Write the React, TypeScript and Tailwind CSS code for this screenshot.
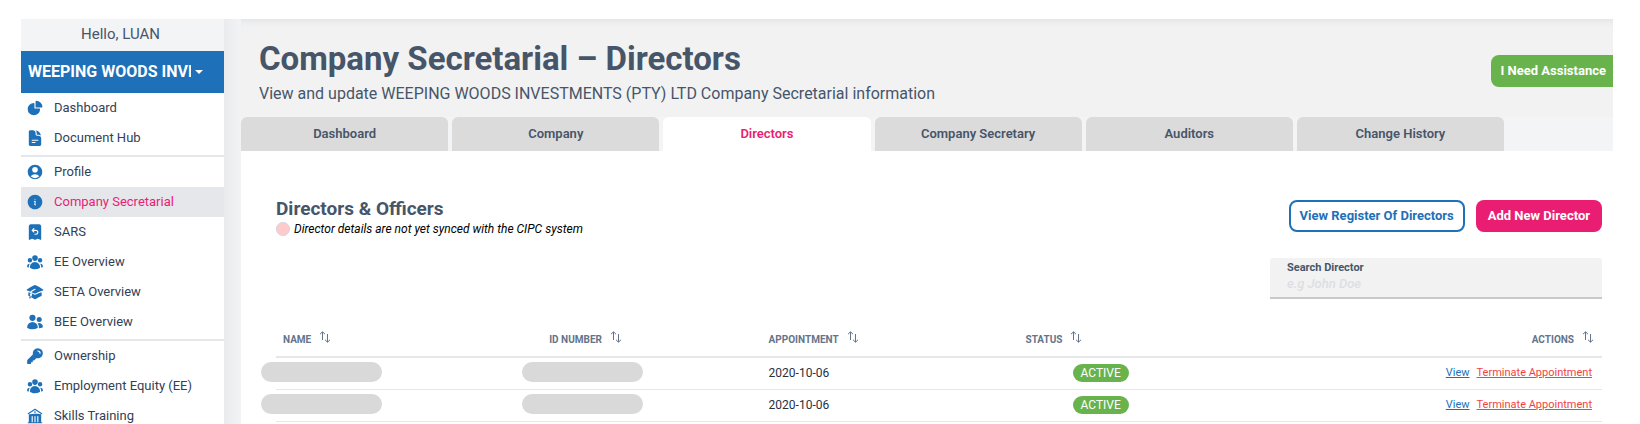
import React from "react";
import {
  HiAcademicCap,
  HiBuildingLibrary,
  HiChartPie,
  HiDocumentText,
  HiInformationCircle,
  HiKey,
  HiReceiptRefund,
  HiUserCircle,
  HiUserGroup,
  HiUsers,
} from "react-icons/hi2";
import type { IconType } from "react-icons";

type NavItem = { label: string; icon: IconType; active?: boolean };

const navGroups: NavItem[][] = [
  [
    { label: "Dashboard", icon: HiChartPie },
    { label: "Document Hub", icon: HiDocumentText },
  ],
  [
    { label: "Profile", icon: HiUserCircle },
    { label: "Company Secretarial", icon: HiInformationCircle, active: true },
    { label: "SARS", icon: HiReceiptRefund },
    { label: "EE Overview", icon: HiUserGroup },
    { label: "SETA Overview", icon: HiAcademicCap },
    { label: "BEE Overview", icon: HiUsers },
  ],
  [
    { label: "Ownership", icon: HiKey },
    { label: "Employment Equity (EE)", icon: HiUserGroup },
    { label: "Skills Training", icon: HiBuildingLibrary },
  ],
];

const tabs = ["Dashboard", "Company", "Directors", "Company Secretary", "Auditors", "Change History"];

const directors = [
  { id: 1, appointed: "2020-10-06", status: "ACTIVE" },
  { id: 2, appointed: "2020-10-06", status: "ACTIVE" },
];

function SortIcon() {
  return (
    <svg className="h-3 w-3" viewBox="0 0 12 12" fill="none" stroke="currentColor" strokeWidth="1" aria-hidden="true">
      <path d="M3.5 9V1M1 3.2 3.5 0.8 6 3.2M8.5 3v8M6 8.8l2.5 2.4L11 8.8" />
    </svg>
  );
}

function ColumnHeader({ label, className }: { label: string; className: string }) {
  return (
    <th scope="col" className={className}>
      <button type="button" className="inline-flex items-start gap-2 leading-4 font-bold">
        <span className="pt-px">{label}</span>
        <SortIcon />
      </button>
    </th>
  );
}

function Sidebar() {
  return (
    <aside className="flex w-[203px] shrink-0 flex-col">
      <p className="shrink-0 bg-[#f3f4f6] pb-0.5 text-center text-[15px] leading-[30px] text-[#475569]">
        <span className="pr-1">Hello, LUAN</span>
      </p>
      <button
        type="button"
        aria-haspopup="listbox"
        className="flex h-[42px] shrink-0 items-center gap-1 bg-[#1e70b8] pl-[7px] text-[16px] font-bold text-white"
      >
        <span className="w-[163px] overflow-hidden text-left whitespace-nowrap">WEEPING WOODS INVESTMENTS</span>
        <svg className="h-1 w-2" viewBox="0 0 8 4" fill="currentColor" aria-hidden="true">
          <path d="M0 0h8L4 4z" />
        </svg>
      </button>
      <nav aria-label="Main">
        {navGroups.map((group, index) => (
          <ul key={index} className="border-[#e5e7eb] not-last:border-b-2 not-last:pb-[2px]">
            {group.map(({ label, icon: Icon, active }) => (
              <li key={label}>
                <a
                  href="#"
                  aria-current={active ? "page" : undefined}
                  className={
                    active
                      ? "flex h-[30px] items-center gap-[10px] bg-[#e5e7eb] pl-[5px] text-[13px] text-[#e91e73]"
                      : "flex h-[30px] items-center gap-[10px] pl-[5px] text-[13px] text-[#334155]"
                  }
                >
                  <Icon className="h-[18px] w-[18px] text-[#1e70b8]" />
                  {label}
                </a>
              </li>
            ))}
          </ul>
        ))}
      </nav>
    </aside>
  );
}

function DirectorsTable() {
  return (
    <table className="mt-8 w-full table-fixed text-left text-xs">
      <thead className="border-b-2 border-[#e5e7eb] text-[10px] text-[#64748b]">
        <tr className="h-[26px] align-top">
          <ColumnHeader label="NAME" className="w-[20%] pl-[7px]" />
          <ColumnHeader label="ID NUMBER" className="w-[17%] pl-2" />
          <ColumnHeader label="APPOINTMENT" className="w-[19%] pl-[2px]" />
          <ColumnHeader label="STATUS" className="w-[17%] pl-[7px]" />
          <ColumnHeader label="ACTIONS" className="pr-2 text-right" />
        </tr>
      </thead>
      <tbody>
        {directors.map((director) => (
          <tr key={director.id} className="h-8 border-b border-[#e5e7eb]">
            <td>
              <div aria-label="Name hidden" className="-mt-0.5 -ml-[15px] h-5 w-[121px] rounded-full bg-[#d9d9d9]" />
            </td>
            <td>
              <div aria-label="ID number hidden" className="-mt-0.5 -ml-[19px] h-5 w-[121px] rounded-full bg-[#d9d9d9]" />
            </td>
            <td className="pl-[2px] text-[#27303f]">{director.appointed}</td>
            <td className="pl-[54px]">
              <span className="inline-block rounded-full bg-[#69b34c] px-2 text-xs leading-[18px] text-white">
                {director.status}
              </span>
            </td>
            <td className="pr-2.5 text-right text-[11px]">
              <a href="#" className="mr-[7px] text-[#1e70b8] underline">View</a>
              <a href="#" className="text-[#ef4444] underline">Terminate Appointment</a>
            </td>
          </tr>
        ))}
      </tbody>
    </table>
  );
}

export default function App() {
  return (
    <div className="flex h-screen overflow-hidden bg-white pt-[19px] pr-[27px] pl-[21px] font-[Roboto,sans-serif]">
      <Sidebar />
      <main className="flex min-w-0 flex-1 flex-col overflow-hidden bg-linear-to-r from-[#e9ebee] to-[#f2f3f5] to-[17px] pl-[17px]">
        <header className="flex h-[98px] shrink-0 justify-between bg-[#f2f2f2] pt-[18px] pl-[18px] inset-shadow-[0_6px_6px_-4px_#dfe2e7]">
          <div className="pt-0.5">
            <h1 className="text-[33px] leading-10 font-bold text-[#475569]">Company Secretarial – Directors</h1>
            <p className="mt-[3px] text-[16px] leading-6 text-[#475569]">
              View and update WEEPING WOODS INVESTMENTS (PTY) LTD Company Secretarial information
            </p>
          </div>
          <button
            type="button"
            className="mt-[18px] h-8 rounded-l-lg bg-[#69b34c] pr-[7px] pl-[10px] text-[13px] font-bold text-white"
          >
            I Need Assistance
          </button>
        </header>
        <div role="tablist" className="flex gap-1 bg-[#f3f4f6]">
          {tabs.map((tab) => (
            <button
              key={tab}
              type="button"
              role="tab"
              aria-selected={tab === "Directors"}
              className={
                tab === "Directors"
                  ? "h-[34px] w-[15.1%] rounded-t-md bg-white text-[13px] font-semibold text-[#e91e73]"
                  : "h-[34px] w-[15.1%] rounded-t-md bg-[#dbdbdb] text-[13px] font-semibold text-[#475569]"
              }
            >
              {tab}
            </button>
          ))}
        </div>
        <section className="flex-1 bg-white pt-12 pr-[11px] pl-[35px]">
          <div className="flex items-start justify-between">
            <div>
              <h2 className="text-[19px] leading-5 font-bold text-[#475569]">Directors &amp; Officers</h2>
              <p className="flex items-center gap-1 text-xs leading-5 text-black italic">
                <span className="h-3.5 w-3.5 rounded-full border border-[#d1d5db] bg-[#fecaca]" />
                Director details are not yet synced with the CIPC system
              </p>
            </div>
            <div className="mt-px flex gap-[11px]">
              <button
                type="button"
                className="h-8 rounded-lg border-2 border-[#1e70b8] bg-white px-[9px] text-[13px] font-bold text-[#1e70b8]"
              >
                View Register Of Directors
              </button>
              <button type="button" className="h-8 rounded-lg bg-[#e91e73] px-3 text-[13px] font-bold text-white">
                Add New Director
              </button>
            </div>
          </div>
          <div className="mt-[19px] ml-auto flex h-[41px] w-[332px] flex-col rounded-t border-b-2 border-[#c9c9c9] bg-[#f2f2f2] pt-0.5 pl-[17px]">
            <label htmlFor="search-director" className="text-[11px] leading-4 font-bold text-[#475569]">
              Search Director
            </label>
            <input
              id="search-director"
              type="text"
              placeholder="e.g John Doe"
              className="h-4 w-full bg-transparent text-[13px] font-medium italic outline-none placeholder:text-[#dcdfe4]"
            />
          </div>
          <DirectorsTable />
        </section>
      </main>
    </div>
  );
}
